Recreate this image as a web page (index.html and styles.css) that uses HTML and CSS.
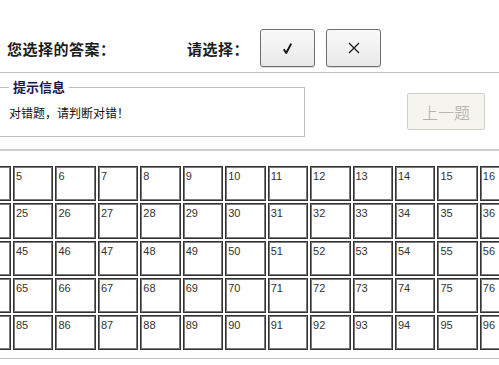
FILE: index.html
```html
<!DOCTYPE html>
<html lang="zh-CN">
<head>
  <meta charset="UTF-8">
  <meta name="viewport" content="width=device-width, initial-scale=1.0">
  <title>答题卡</title>
  <link rel="stylesheet" href="styles.css">
</head>
<body>
  <div class="page">
    <div class="answer-bar">
      <span class="label label-answer">您选择的答案：</span>
      <span class="label">请选择：</span>
      <button class="pick" type="button" title="对">
        <svg width="9" height="11" viewBox="0 0 9 11"><path d="M0.8 6.2 L3.2 10 L8.2 0.6" fill="none" stroke="#111" stroke-width="1.9" stroke-linejoin="round"/></svg>
      </button>
      <button class="pick" type="button" title="错">
        <svg width="12" height="12" viewBox="0 0 12 12"><path d="M1 1 L11 11 M11 1 L1 11" stroke="#222" stroke-width="1.4"/></svg>
      </button>
    </div>

    <div class="hint-bar">
      <fieldset class="hint">
        <legend>提示信息</legend>
        <p>对错题，请判断对错！</p>
      </fieldset>
      <button class="prev" type="button" disabled>上一题</button>
    </div>

    <div class="card-wrap">
      <div class="card-grid" id="grid"></div>
    </div>
  </div>

  <script>
    // 题号每行 20 个，这里只显示第 4-16 列
    var grid = document.getElementById('grid');
    for (var row = 0; row < 5; row++) {
      for (var col = 4; col <= 16; col++) {
        var cell = document.createElement('div');
        cell.className = 'cell';
        if (col > 4) cell.textContent = row * 20 + col;
        grid.appendChild(cell);
      }
    }
  </script>
</body>
</html>
```

FILE: styles.css
```css
* {
  box-sizing: border-box;
}
body {
  margin: 0;
  background: #fff;
  font-family: "Liberation Sans", "Noto Sans CJK SC", sans-serif;
  color: #222;
}
.page {
  width: 499px;
  height: 365px;
  overflow: hidden;
}

/* 顶部：答案 + 选择按钮 */
.answer-bar {
  display: flex;
  align-items: center;
  height: 73px;
  padding: 29px 0 5px 7px;
  border-bottom: 1px solid #c4c4c4;
}
.label {
  font-family: "Noto Sans CJK SC", sans-serif;
  font-size: 15px;
  font-weight: bold;
  color: #1c1c1c;
  letter-spacing: 0.5px;
}
.label-answer {
  width: 180px;
}
.pick {
  display: flex;
  align-items: center;
  justify-content: center;
  width: 55px;
  height: 38px;
  margin-left: 11px;
  padding: 0;
  border: 1px solid #6f6f6f;
  border-radius: 3px;
  background: linear-gradient(#f9f9f9, #e9e9e9);
  box-shadow: 0 1px 1px rgba(0,0,0,0.15);
}
.pick:first-of-type {
  margin-left: 11px;
}

/* 提示信息 */
.hint-bar {
  display: flex;
  align-items: flex-start;
  height: 78px;
  padding-top: 6px;
  border-bottom: 2px solid #cfcfcf;
}
.hint {
  width: 309px;
  height: 58px;
  margin: 0 0 0 -4px;
  padding: 0 0 0 12px;
  border: 1px solid #bdbdbd;
}
.hint legend {
  padding: 0 4px;
  font-family: "Noto Sans CJK SC", sans-serif;
  font-size: 13px;
  line-height: 16px;
  font-weight: bold;
  color: #1a1a52;
}
.hint p {
  margin: 10px 0 0;
  font-family: "Noto Sans CJK SC", sans-serif;
  font-size: 12px;
  line-height: 16px;
  color: #111;
}
.prev {
  width: 78px;
  height: 37px;
  margin: 14px 14px 0 auto;
  border: 1px solid #d0d0c8;
  border-radius: 2px;
  background: #f5f4ef;
  font-family: "Noto Sans CJK SC", sans-serif;
  font-size: 16px;
  font-weight: 300;
  color: #a8a8a4;
}

/* 答题卡 */
.card-wrap {
  height: 208px;
  padding-top: 15px;
  border-bottom: 1px solid #c0c0c0;
}
.card-grid {
  display: grid;
  grid-template-columns: repeat(13, 40.45px);
  grid-auto-rows: 35.25px;
  gap: 2px;
  margin-left: -29.45px;
}
.cell {
  padding: 2px 0 0 2px;
  border: 1px solid #333;
  box-shadow: inset 0 0 0 1px #7a7a7a;
  font-family: "Liberation Sans", sans-serif;
  font-size: 11px;
  line-height: 14px;
  color: #333;
}
```
